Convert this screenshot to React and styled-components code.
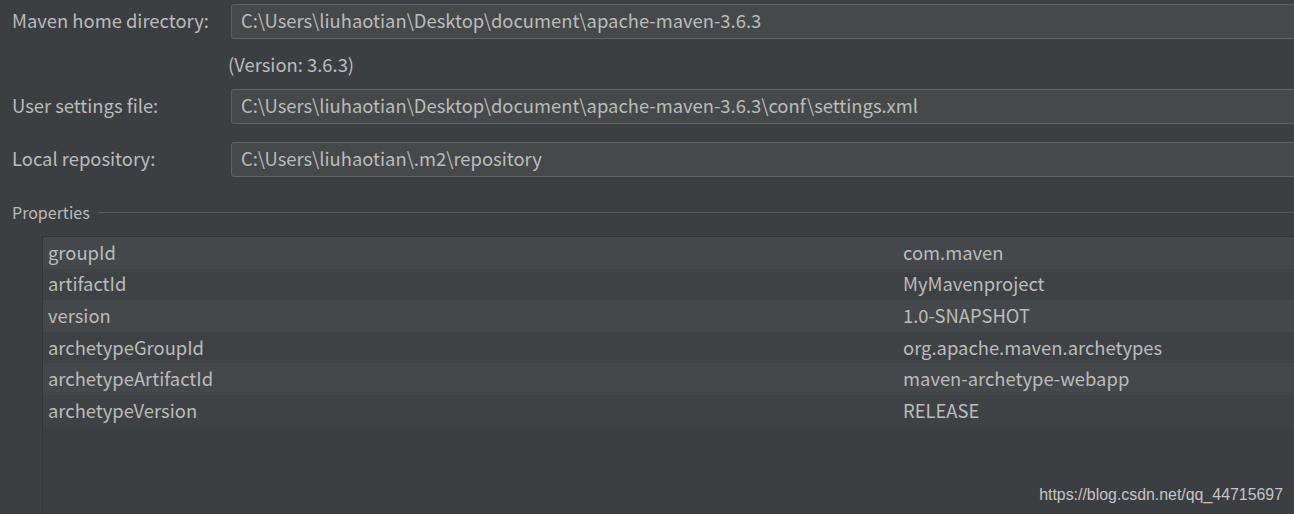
import React from "react";
import styled, { createGlobalStyle } from "styled-components";

const Global = createGlobalStyle`
  html, body { margin: 0; padding: 0; background: #3c3f41; }
  body { width: 1294px; height: 514px; overflow: hidden; }
  #root { height: 100%; }
`;

const Page = styled.div`
  position: relative;
  height: 514px;
  overflow: hidden;
  padding-top: 4px;
  box-sizing: border-box;
  font-family: "Noto Sans CJK SC", "Noto Sans", sans-serif;
  font-size: 18.4px;
  color: #bbbbbb;
  display: flex;
  flex-direction: column;
`;

const FormRow = styled.div`
  display: flex;
  align-items: center;
  height: 35px;
  margin-top: ${(p) => p.$gap || 0}px;
`;

const Label = styled.div`
  width: 219px;
  padding-left: 12px;
  padding-bottom: 3px;
  flex: none;
`;

const Field = styled.div`
  flex: 1;
  height: 35px;
  box-sizing: border-box;
  margin-right: -6px;
  background: #45494a;
  border: 1px solid #5e6263;
  border-radius: 3px;
  display: flex;
  align-items: center;
  padding: 0 0 3px 9px;
  color: #bbbbbb;
  white-space: nowrap;
`;

const Hint = styled.div`
  height: 50px;
  display: flex;
  align-items: center;
  padding-left: 228px;
  padding-bottom: 1px;
  box-sizing: border-box;
`;

const GroupTitle = styled.div`
  display: flex;
  align-items: center;
  gap: 8px;
  height: 24px;
  margin-top: 23px;
  padding-left: 12px;
  font-size: 16px;
  &::after {
    content: "";
    flex: 1;
    height: 1px;
    background: #56595b;
    margin-top: 0px;
  }
`;

const Table = styled.div`
  margin-top: 12px;
  margin-left: 42px;
  flex: 1;
  border-top: 1px solid #323436;
  border-left: 1px solid #323436;
  background: #3c3f41;
`;

const TRow = styled.div`
  display: grid;
  grid-template-columns: 855px 1fr;
  height: 31.6px;
  align-items: center;
  background: ${(p) => (p.$odd ? "#45484a" : "#3f4244")};
`;

const Cell = styled.div`
  padding-left: 5px;
  padding-bottom: 2px;
  white-space: nowrap;
`;

const Watermark = styled.div`
  position: absolute;
  right: 11px;
  bottom: 10px;
  font-family: "Liberation Sans", Arial, sans-serif;
  font-size: 15.9px;
  color: #c4c4c4;
`;

const props = [
  ["groupId", "com.maven"],
  ["artifactId", "MyMavenproject"],
  ["version", "1.0-SNAPSHOT"],
  ["archetypeGroupId", "org.apache.maven.archetypes"],
  ["archetypeArtifactId", "maven-archetype-webapp"],
  ["archetypeVersion", "RELEASE"],
];

export default function App() {
  return (
    <>
      <Global />
      <Page>
        <FormRow>
          <Label>Maven home directory:</Label>
          <Field>C:\Users\liuhaotian\Desktop\document\apache-maven-3.6.3</Field>
        </FormRow>
        <Hint>(Version: 3.6.3)</Hint>
        <FormRow>
          <Label>User settings file:</Label>
          <Field>C:\Users\liuhaotian\Desktop\document\apache-maven-3.6.3\conf\settings.xml</Field>
        </FormRow>
        <FormRow $gap={18}>
          <Label>Local repository:</Label>
          <Field>C:\Users\liuhaotian\.m2\repository</Field>
        </FormRow>
        <GroupTitle>Properties</GroupTitle>
        <Table>
          {props.map(([k, v], i) => (
            <TRow key={k} $odd={i % 2 === 0}>
              <Cell>{k}</Cell>
              <Cell>{v}</Cell>
            </TRow>
          ))}
        </Table>
        <Watermark>https://blog.csdn.net/qq_44715697</Watermark>
      </Page>
    </>
  );
}
